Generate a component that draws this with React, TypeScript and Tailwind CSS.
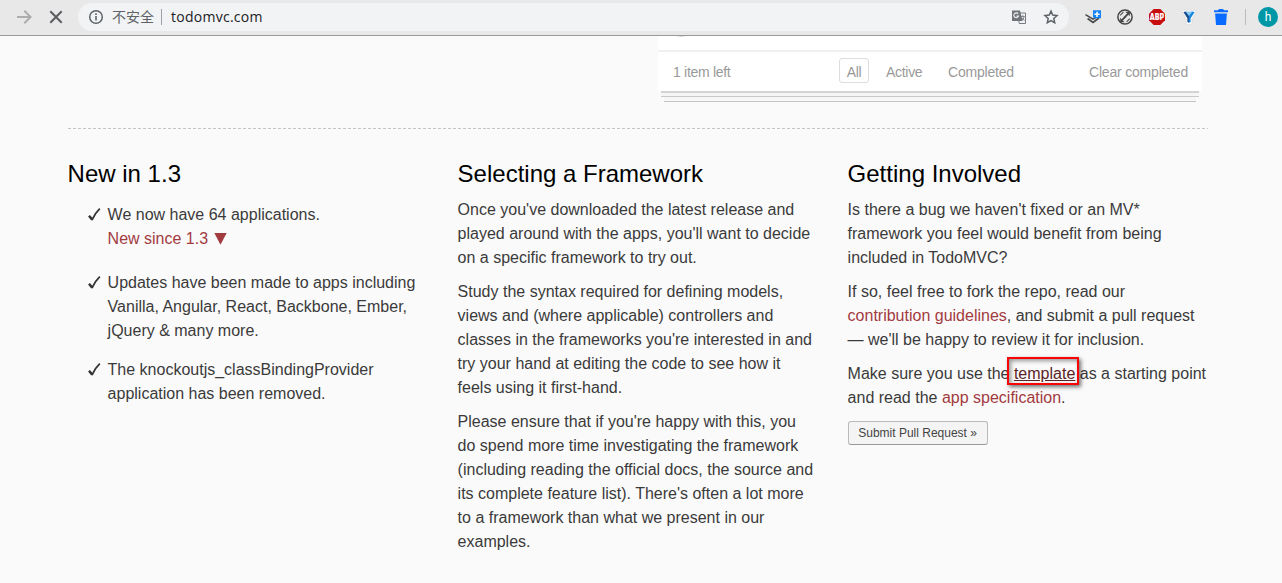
import type { ReactNode } from "react";

function BrowserBar() {
  return (
    <header className="flex h-9 shrink-0 items-start border-b border-[#999] bg-[#e8e8e8]">
      <svg className="ml-4 mt-[9px] h-4 w-4 shrink-0" viewBox="0 0 16 16" fill="none" stroke="#adadad" strokeWidth="2">
        <path d="M1 8h13M8.3 1.7L14.6 8l-6.3 6.3" />
      </svg>
      <svg className="ml-4 mt-[9px] h-4 w-4 shrink-0" viewBox="0 0 16 16" fill="none" stroke="#5a5c60" strokeWidth="2">
        <path d="M2.3 2.3l11.4 11.4M13.7 2.3L2.3 13.7" />
      </svg>
      <div className="ml-[14px] mt-[3px] flex h-7 w-[991px] shrink-0 items-center rounded-full bg-[#f1f3f4] pl-[10px] pr-[10px]">
        <svg className="h-4 w-4 shrink-0" viewBox="0 0 16 16" fill="none" stroke="#5f6368">
          <circle cx="8" cy="8" r="6.3" strokeWidth="1.5" />
          <path d="M8 7v4.5M8 4.3v1.6" strokeWidth="1.6" />
        </svg>
        <span className="-mt-[2px] ml-2 w-[49px] whitespace-nowrap font-['Noto_Sans_CJK_SC',sans-serif] text-sm leading-7 text-[#5f6368]">不安全</span>
        <span className="h-4 w-px bg-[#9aa0a6]" />
        <span className="ml-[9px] whitespace-nowrap font-['Open_Sans',sans-serif] text-sm leading-7 tracking-[0.26px] text-[#202124]">todomvc.com</span>
        <svg className="ml-auto h-4 w-4 shrink-0" viewBox="0 0 16 16">
          <path d="M6.5 4h8v10.5H8.3z" fill="#f1f3f4" stroke="#777b80" />
          <path d="M1 1.5h8l2.6 10.5H1z" fill="#707378" />
          <path d="M7.2 4.9A2.4 2.4 0 1 0 7.5 7.1H5.5" fill="none" stroke="#f1f3f4" strokeWidth="1.1" />
          <path d="M9.9 7.5h3.8M11.9 6.2v1.3M13 7.8c-.4 1.8-1 2.6-2 3.4M11.2 8.8l2.2 2.8" fill="none" stroke="#777b80" strokeWidth=".9" />
        </svg>
        <svg className="ml-4 h-4 w-4 shrink-0" viewBox="0 0 16 16" fill="none" stroke="#5f6368" strokeWidth="1.5">
          <path d="M8 2.1l1.7 4 4.3.4-3.2 2.9.9 4.3L8 11.5l-3.7 2.2.9-4.3L2 6.5l4.3-.4z" />
        </svg>
      </div>
      <div className="mt-[9px] flex items-center">
        <svg className="ml-4 h-4 w-4" viewBox="0 0 16 16" fill="none">
          <path d="M.5 5.6L8 10.2l4-2.4" stroke="#4a4a4a" strokeWidth="1.5" />
          <path d="M2.6 9.6L8 13.5l6-4.4" stroke="#4a4a4a" strokeWidth="1.8" />
          <path d="M8 1.3h8v8h-6.7L8 8z" fill="#1583f5" />
          <path d="M12 2.7v5.2M9.4 5.3h5.2" stroke="#fff" strokeWidth="1.5" />
        </svg>
        <svg className="ml-4 h-4 w-4" viewBox="0 0 16 16" fill="none">
          <circle cx="8" cy="8" r="7.1" stroke="#444" strokeWidth="1.5" />
          <path d="M8.4 2.8h4.4v4.4zM7.6 13.2H3.2V8.8z" fill="#444" />
          <path d="M11 4.8L7 8.8M5 11.2l4-4" stroke="#444" strokeWidth="1.8" />
          <path d="M3.2 6.3l3.2-3.2M9.6 12.9l3.2-3.2" stroke="#555" strokeWidth="1.2" />
        </svg>
        <svg className="ml-4 h-4 w-4 overflow-visible" viewBox="0 0 16 16">
          <path d="M4.7 0h6.6L16 4.7v6.6L11.3 16H4.7L0 11.3V4.7z" fill="#c70d0d" />
          <text x="8" y="11" fill="#fff" stroke="#fff" strokeWidth=".2" textAnchor="middle" fontSize="8" fontWeight="700" fontFamily="DejaVu Sans" textLength="14.4" lengthAdjust="spacingAndGlyphs">ABP</text>
        </svg>
        <svg className="ml-4 h-4 w-4 overflow-visible" viewBox="0 0 16 16">
          <path d="M2.2 1.2h11.6c1.2 0 1.5 1.5.9 2.5L11 9.5v5.3l-1 .8H6.2l-1-.8V9.5L1.3 3.7c-.6-1-.3-2.5.9-2.5z" fill="#fff" stroke="#d5d5d5" strokeWidth=".6" />
          <path d="M2.3 2.9l2.8-.5L8 4.6v9.2l-1.6-.7V9.2z" fill="#1b4e8e" />
          <path d="M13.7 2.9l-2.8-.5L8 4.6v9.2l1.6-.7V9.2z" fill="#1687dc" />
          <path d="M4.6 2.4h6.8L8 7z" fill="#8acbf3" />
        </svg>
        <svg className="ml-4 h-4 w-4" viewBox="0 0 16 16" fill="#0a6cff">
          <path d="M1 1.2h4L6 0h4l1 1.2h4v2H1zM2.1 4.4h11.8L13 16H3z" />
        </svg>
        <span className="ml-4 h-4 w-px bg-[#bcbcbc]" />
      </div>
      <span className="ml-3 mt-[7px] flex h-5 w-5 items-center justify-center rounded-full bg-[#0097a7] font-['Roboto',sans-serif] text-xs leading-none text-white">h</span>
    </header>
  );
}

function TodoPreview() {
  return (
    <div className="flex h-[92px] justify-end pr-[5.6px] font-['Liberation_Sans',sans-serif] text-sm text-[#999]">
      <div className="w-[544px]">
        <div className="h-[14px] overflow-hidden bg-white pl-[14px]">
          <div className="-mt-[28px] h-[29px] w-[18px] rounded-full border-2 border-[#ddd]" />
        </div>
        <div className="relative z-10 flex h-[41px] items-center border-t-2 border-[#f0f0f0] bg-white pl-[15px] tracking-[-0.3px]">
          <span className="w-[166px] whitespace-nowrap tracking-[-0.3px]">1 item left</span>
          <span className="-mt-[2px] flex h-[25px] w-[30px] items-center justify-center rounded-[3px] border border-[#ddd] pt-[2px]">All</span>
          <span className="ml-[17px] w-[62px]">Active</span>
          <span className="tracking-[-0.2px]">Completed</span>
          <span className="ml-auto mr-[14px] tracking-[-0.2px]">Clear completed</span>
        </div>
        <div className="mx-[3px] h-[6px] border-b border-t-2 border-b-[#c8c8c8] border-t-[#d3d3d3] bg-[#f5f5f5]" />
        <div className="mx-[6px] h-[5px] border-b border-[#c4c4c4] bg-[#f7f7f7]" />
      </div>
    </div>
  );
}

function Column({ title, children }: { title: string; children: ReactNode }) {
  return (
    <section className="w-[360px] whitespace-nowrap">
      <h2 className="mb-[10px] text-2xl leading-[28px] text-black">{title}</h2>
      {children}
    </section>
  );
}

function NewsItem({ className, children }: { className: string; children: ReactNode }) {
  return (
    <li className={className}>
      <svg className="ml-5 mr-[7px] mt-[5px] h-[14px] w-[13px] shrink-0" viewBox="0 0 13 14" fill="none" stroke="#333">
        <path d="M1 7.8L4.2 11.6" strokeWidth="2.5" />
        <path d="M3.9 12.2C6 7.3 8.2 4.1 11.8.7" strokeWidth="1.8" />
      </svg>
      <div>{children}</div>
    </li>
  );
}

export default function App() {
  return (
    <div className="flex h-[583px] w-[1282px] flex-col overflow-hidden bg-[#fafafa]">
      <BrowserBar />
      <main className="ml-[67.6px] w-[1140px] font-['Liberation_Sans',Arial,sans-serif] text-base leading-6 text-[#3a3a3a]">
        <TodoPreview />
        <div className="h-px w-full bg-[repeating-linear-gradient(to_right,#c5c5c5_0_3px,transparent_3px_4.994px)]" />
        <div className="mt-[31px] flex gap-[30px]">
          <Column title="New in 1.3">
            <ul className="pt-[5px]">
              <NewsItem className="flex">
                We now have 64 applications.
                <br />
                <a className="flex items-center text-[#a23b3f]">
                  New since 1.3
                  <svg className="ml-[6px] -mt-px h-[13px] w-[13px]" viewBox="0 0 12 12" fill="currentColor">
                    <path d="M.3 1h11.4L6 11.7z" />
                  </svg>
                </a>
              </NewsItem>
              <NewsItem className="mt-5 flex">
                Updates have been made to apps including
                <br />
                Vanilla, Angular, React, Backbone, Ember,
                <br />
                jQuery &amp; many more.
              </NewsItem>
              <NewsItem className="mt-[15px] flex">
                The knockoutjs_classBindingProvider
                <br />
                application has been removed.
              </NewsItem>
            </ul>
          </Column>
          <Column title="Selecting a Framework">
            <div className="space-y-[10px]">
              <p>
                Once you've downloaded the latest release and
                <br />
                played around with the apps, you'll want to decide
                <br />
                on a specific framework to try out.
              </p>
              <p>
                Study the syntax required for defining models,
                <br />
                views and (where applicable) controllers and
                <br />
                classes in the frameworks you're interested in and
                <br />
                try your hand at editing the code to see how it
                <br />
                feels using it first-hand.
              </p>
              <p>
                Please ensure that if you're happy with this, you
                <br />
                do spend more time investigating the framework
                <br />
                (including reading the official docs, the source and
                <br />
                its complete feature list). There's often a lot more
                <br />
                to a framework than what we present in our
                <br />
                examples.
              </p>
            </div>
          </Column>
          <Column title="Getting Involved">
            <div className="space-y-[10px]">
              <p>
                Is there a bug we haven't fixed or an MV*
                <br />
                framework you feel would benefit from being
                <br />
                included in TodoMVC?
              </p>
              <p>
                If so, feel free to fork the repo, read our
                <br />
                <a className="text-[#a23b3f]">contribution guidelines</a>, and submit a pull request
                <br />— we'll be happy to review it for inclusion.
              </p>
              <p>
                Make sure you use the{" "}
                <a className="relative text-[#5a2426] underline">
                  template
                  <span className="absolute -left-[7px] -top-[8px] h-[28px] w-[72px] border-2 border-[#fa0505] shadow-[2px_2px_4px_rgba(0,0,0,0.55),inset_2px_2px_4px_rgba(0,0,0,0.4)]" />
                </a>{" "}
                as a starting point
                <br />
                and read the <a className="text-[#a23b3f]">app specification</a>.
              </p>
            </div>
            <button className="mt-[11px] block h-6 w-[140px] rounded-[3px] border border-[#bbb] border-b-[#999] bg-[#f4f4f4] text-xs leading-[22px] text-[#444]">
              Submit Pull Request »
            </button>
          </Column>
        </div>
      </main>
    </div>
  );
}
